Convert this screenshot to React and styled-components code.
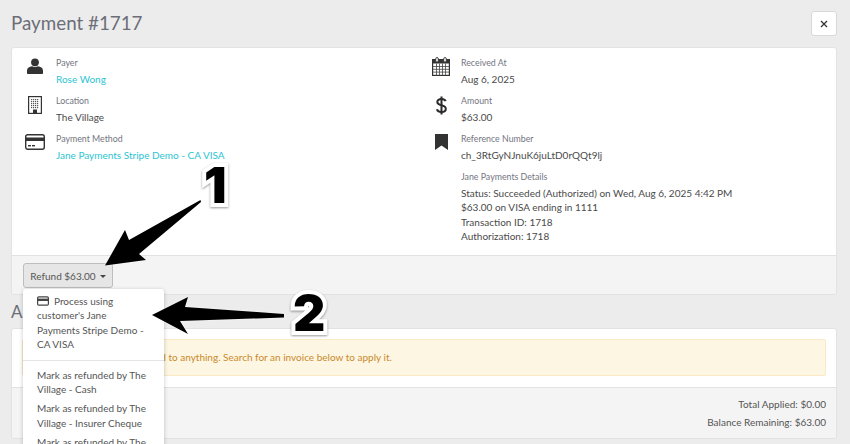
import React from "react";
import styled, { createGlobalStyle } from "styled-components";

const Global = createGlobalStyle`
  html, body { margin: 0; padding: 0; background: #ececec; }
  body { font-family: "Lato", "Open Sans", "Liberation Sans", sans-serif; color: #4a4a4a; }
`;

const Page = styled.div`
  position: relative; width: 850px; height: 444px; overflow: hidden;
  padding: 11px 13px 0 11px; box-sizing: border-box; background: #ececec;
`;
const Header = styled.header`
  display: flex; justify-content: space-between; align-items: flex-start; height: 36px;
`;
const Title = styled.h1`
  margin: 0; font-size: 18.800px; line-height: 23px; font-weight: 400; color: #6c6e78;
`;
const CloseButton = styled.button`
  width: 26px; height: 25px; padding: 0; background: #fff; border: 1px solid #d9d9d9; border-radius: 3px;
  display: flex; align-items: center; justify-content: center; color: #333;
`;
const Panel = styled.section`
  background: #fff; border: 1px solid #e2e2e2; border-radius: 3px; overflow: hidden;
`;
const Details = styled.div`
  display: grid; grid-template-columns: 403px 1fr; height: 207px; box-sizing: border-box; padding-top: 8px;
`;
const Column = styled.div`
  display: flex; flex-direction: column; gap: 6px;
`;
const Row = styled.div`
  display: grid; grid-template-columns: ${p => p.$icon}px 1fr; min-height: 32px;
`;
const IconCell = styled.div`
  display: flex; justify-content: center; padding: 3px 0 0 ${p => p.$inset}px; height: 24px; color: #333;
`;
const Label = styled.div`
  font-size: 8.800px; line-height: 14px; color: #73757f; height: 15px;
`;
const Value = styled.div`
  font-size: 10px; line-height: 14.300px; color: #4a4a4a; margin-top: 1px;
`;
const LinkValue = styled(Value)` color: #2cc4d3; `;
const FooterBar = styled.div`
  height: 39px; background: #f4f4f4; border-top: 1px solid #e2e2e2; padding: 7px 0 0 11px; box-sizing: border-box;
`;
const RefundButton = styled.button`
  width: 90px; height: 25px; padding: 0; font: inherit; font-size: 10px; color: #555;
  background: #e6e6e6; border: 1px solid #bdbdbd; border-radius: 3px;
  display: flex; align-items: center; justify-content: center; gap: 4px;
`;
const Caret = styled.span`
  width: 0; height: 0; border: 3px solid transparent; border-top: 3px solid #444; border-bottom: 0; margin-top: 2px;
`;
const SectionHeading = styled.h2`
  margin: 0; height: 33px; padding-top: 5px; box-sizing: border-box; font-size: 17px; line-height: 24px;
  font-weight: 400; color: #6c6e78;
`;
const AlertWrap = styled.div`
  padding: 10px 10px 12px 10px; height: 58px; box-sizing: border-box;
`;
const Alert = styled.div`
  height: 37px; box-sizing: border-box; background: #fdf6e3; border: 1px solid #fbe8c4; border-radius: 2px;
  font-size: 10px; line-height: 35px; color: #c98a2b; padding-left: 23px; white-space: nowrap;
`;
const Totals = styled.div`
  background: #f4f4f4; border-top: 1px solid #e2e2e2; height: 51px; box-sizing: border-box; padding: 9px 10px 0;
  display: flex; flex-direction: column; align-items: flex-end; gap: 3.500px; font-size: 10px; line-height: 14.300px; color: #555;
`;
const Dropdown = styled.ul`
  position: absolute; left: 23px; top: 289px; width: 141px; margin: 0; padding: 5px 0 0; list-style: none;
  background: #fff; border-radius: 3px; box-shadow: 0 1px 4px rgba(0,0,0,.22); box-sizing: border-box; height: 170px;
`;
const MenuItem = styled.li`
  padding: 0 14px; font-size: 10px; line-height: 14.300px; color: #555; margin-bottom: 4.700px;
`;
const MenuDivider = styled.li`
  height: 1px; background: #e4e4e4; margin: 9px 0 7px;
`;
const CardGlyph = styled.svg`
  vertical-align: -1px; margin-right: 5px;
`;
const ArrowLayer = styled.svg`
  position: absolute; left: 0; top: 0; width: 850px; height: 444px; pointer-events: none;
`;
const Badge = styled.span`
  position: absolute; left: ${p => p.$x}px; top: ${p => p.$y}px;
  font-family: "Inter", "Liberation Sans", sans-serif; font-weight: 900; font-size: 50px; line-height: 50px; color: #000;
  -webkit-text-stroke: 8px #fff; paint-order: stroke fill;
  filter: drop-shadow(0 1px 1px rgba(0,0,0,.4));
`;

const Person = () => (
  <svg width="16" height="17" viewBox="0 0 16 17" style={{marginTop:-1}}><circle cx="8" cy="4.300" r="3.900" fill="#333"/><path d="M1 16c-.6 0-1-.4-1-1v-2.500C0 10 2.500 8.600 5 8.300c1.800 1 4.200 1 6 0 2.500.3 5 1.700 5 4.200V15c0 .6-.4 1-1 1z" fill="#333"/></svg>
);
const Building = () => (
  <svg width="14" height="18" viewBox="0 0 14 18" style={{marginTop:-1}}>
    <rect x=".6" y=".6" width="12.800" height="16.800" fill="#fff" stroke="#333" strokeWidth="1.200"/>
    <g fill="#555">{[3,5,7,9].map(x=>[3,5,7,9,11].map(y=><rect key={x+"-"+y} x={x} y={y} width="1.200" height="1.200"/>))}</g>
    <rect x="5" y="13.500" width="4" height="4" fill="#333"/>
  </svg>
);
const Card = () => (
  <svg width="20" height="16" viewBox="0 0 20 16" style={{marginTop:-1}}>
    <rect x=".7" y=".7" width="18.600" height="14.600" rx="2" fill="#fff" stroke="#333" strokeWidth="1.400"/>
    <rect x="1" y="3.500" width="18" height="3.500" fill="#333"/>
    <rect x="3" y="11" width="3" height="1.400" fill="#333"/><rect x="7" y="11" width="3" height="1.400" fill="#333"/>
  </svg>
);
const Calendar = () => (
  <svg width="18" height="19" viewBox="0 0 18 19" style={{marginTop:-2}}>
    <rect x=".6" y="2.600" width="16.800" height="15.800" fill="#fff" stroke="#333" strokeWidth="1.200"/>
    <rect x="1" y="3" width="16" height="3.500" fill="#333"/>
    <path d="M1 9.500h16M1 12.300h16M1 15.100h16M4.500 6.500v12M7.500 6.500v12M10.500 6.500v12M13.500 6.500v12" stroke="#444" strokeWidth=".8" fill="none"/>
    <rect x="3.700" y=".6" width="2.600" height="4.500" rx="1.200" fill="#fff" stroke="#333"/>
    <rect x="11.700" y=".6" width="2.600" height="4.500" rx="1.200" fill="#fff" stroke="#333"/>
  </svg>
);
const Dollar = () => (
  <svg width="11" height="19" viewBox="0 0 11 19" style={{marginTop:-1}}>
    <path d="M9.700 5.200C9 3.700 7.500 3 5.500 3 3 3 1.300 4.200 1.300 6s1.500 2.600 4.200 3.300c2.800.7 4.300 1.500 4.300 3.400S8 16 5.500 16c-2.200 0-4-.9-4.600-2.700" fill="none" stroke="#2b2b2b" strokeWidth="2"/>
    <rect x="4.500" y="0.500" width="2" height="18" fill="#2b2b2b"/>
  </svg>
);
const Bookmark = () => (
  <svg width="13" height="16" viewBox="0 0 13 16" style={{marginTop:-1}}><path d="M0 0h13v16L6.500 11.500 0 16z" fill="#333"/></svg>
);

const left = [
  { icon: <Person />, label: "Payer", value: "Rose Wong", link: true },
  { icon: <Building />, label: "Location", value: "The Village" },
  { icon: <Card />, label: "Payment Method", value: "Jane Payments Stripe Demo - CA VISA", link: true },
];
const right = [
  { icon: <Calendar />, label: "Received At", value: "Aug 6, 2025" },
  { icon: <Dollar />, label: "Amount", value: "$63.00" },
  { icon: <Bookmark />, label: "Reference Number", value: "ch_3RtGyNJnuK6juLtD0rQQt9lj" },
];

const Detail = ({ icon, label, value, link, width, inset }) => {
  const V = link ? LinkValue : Value;
  return (
    <Row $icon={width}>
      <IconCell $inset={inset}>{icon}</IconCell>
      <div><Label>{label}</Label><V>{value}</V></div>
    </Row>
  );
};

export default function App() {
  return (
    <Page>
      <Global />
      <Header>
        <Title>Payment #1717</Title>
        <CloseButton aria-label="Close">
          <svg width="8" height="8" viewBox="0 0 8 8"><path d="M1 1l6 6M7 1L1 7" stroke="#333" strokeWidth="1.300"/></svg>
        </CloseButton>
      </Header>
      <Panel>
        <Details>
          <Column>{left.map(r => <Detail key={r.label} {...r} width={44} inset={2} />)}</Column>
          <Column>
            {right.map(r => <Detail key={r.label} {...r} width={46} inset={6} />)}
            <Row $icon={46}>
              <span />
              <div>
                <Label>Jane Payments Details</Label>
                <Value>
                  Status: Succeeded (Authorized) on Wed, Aug 6, 2025 4:42 PM<br />
                  $63.00 on VISA ending in 1111<br />
                  Transaction ID: 1718<br />
                  Authorization: 1718
                </Value>
              </div>
            </Row>
          </Column>
        </Details>
        <FooterBar>
          <RefundButton>Refund $63.00 <Caret /></RefundButton>
        </FooterBar>
      </Panel>
      <SectionHeading>Applied</SectionHeading>
      <Panel>
        <AlertWrap>
          <Alert>This payment is not applied to anything. Search for an invoice below to apply it.</Alert>
        </AlertWrap>
        <Totals>
          <span>Total Applied: $0.00</span>
          <span>Balance Remaining: $63.00</span>
        </Totals>
      </Panel>
      <Dropdown>
        <MenuItem>
          <CardGlyph width="12" height="10" viewBox="0 0 20 16">
            <rect x="1" y="1" width="18" height="14" rx="2" fill="#fff" stroke="#444" strokeWidth="2"/>
            <rect x="1" y="4" width="18" height="4" fill="#444"/>
          </CardGlyph>
          Process using customer's Jane Payments Stripe Demo - CA VISA
        </MenuItem>
        <MenuDivider />
        <MenuItem>Mark as refunded by The Village - Cash</MenuItem>
        <MenuItem>Mark as refunded by The Village - Insurer Cheque</MenuItem>
        <MenuItem>Mark as refunded by The Village</MenuItem>
      </Dropdown>
      <ArrowLayer viewBox="0 0 850 444">
        <g style={{ filter: "drop-shadow(0 0 1px rgba(255,255,255,.8))" }}>
          <path d="M200.500 200 L201 202 L139 254 L146 260 L105 265.500 L125 230 L129 240 Z" fill="#000"/>
          <path d="M152 315 L188 297 L185 307 L284 314 L284 317.500 L180 321 L188 334 Z" fill="#000"/>
        </g>
      </ArrowLayer>
      <Badge $x={204} $y={160}>1</Badge>
      <Badge $x={293} $y={288}>2</Badge>
    </Page>
  );
}
